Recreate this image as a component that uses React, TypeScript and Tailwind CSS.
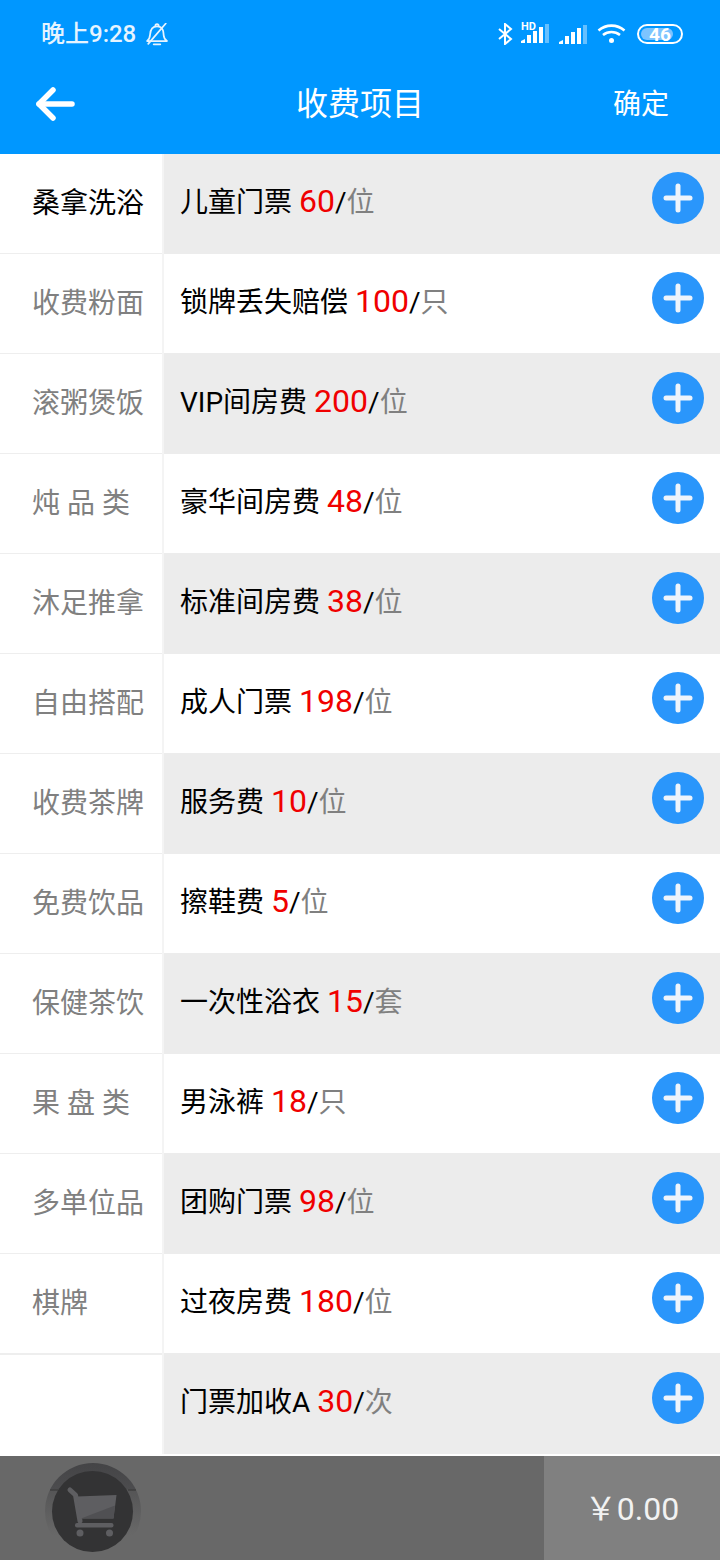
import React from "react";

const categories = [
    "桑拿洗浴",
    "收费粉面",
    "滚粥煲饭",
    "炖 品 类",
    "沐足推拿",
    "自由搭配",
    "收费茶牌",
    "免费饮品",
    "保健茶饮",
    "果 盘 类",
    "多单位品",
    "棋牌",
    "",
];

const items = [
    { name: "儿童门票", price: "60", unit: "位" },
    { name: "锁牌丢失赔偿", price: "100", unit: "只" },
    { name: "VIP间房费", price: "200", unit: "位" },
    { name: "豪华间房费", price: "48", unit: "位" },
    { name: "标准间房费", price: "38", unit: "位" },
    { name: "成人门票", price: "198", unit: "位" },
    { name: "服务费", price: "10", unit: "位" },
    { name: "擦鞋费", price: "5", unit: "位" },
    { name: "一次性浴衣", price: "15", unit: "套" },
    { name: "男泳裤", price: "18", unit: "只" },
    { name: "团购门票", price: "98", unit: "位" },
    { name: "过夜房费", price: "180", unit: "位" },
    { name: "门票加收A", price: "30", unit: "次" },
];

const SignalBars = () => (
    <svg width="28" height="19" viewBox="0 0 28 19" fill="white">
        <path d="M0 19v-2l4-2v4z" />
        <rect x="6" y="11" width="4" height="8" />
        <rect x="12" y="7" width="4" height="12" />
        <rect x="18" y="3" width="4" height="16" />
        <rect x="24" y="0" width="4" height="19" opacity="0.4" />
    </svg>
);

const StatusBar = () => (
    <div className="flex h-[68px] items-center justify-between pl-[41px] pr-[37px]">
        <div className="flex items-center gap-[10px]">
            <span className="text-[24px] font-medium leading-none text-[#e6f4ff]">晚上9:28</span>
            <svg width="22" height="23" viewBox="1 1 20 21" fill="none" stroke="#e6f4ff" strokeWidth="1.6" strokeLinejoin="round">
                <path d="M2 17.5c2.2-1.6 2.5-3.2 2.7-6C5 6.8 7.300 4 11 4c2.600 0 4.500 1.400 5.400 3.600.5 1.300.5 3 .7 4.600.2 2.300.9 3.900 3 5.300z" />
                <path d="M9.500 3.800c0-1 .7-1.800 1.500-1.800s1.500.8 1.500 1.800" />
                <path d="M8 20.500h6" strokeLinecap="round" />
                <path d="M3 20 19 1.500" strokeLinecap="round" />
            </svg>
        </div>
        <div className="flex items-center">
            <svg width="15" height="22" viewBox="0 0 15 22" fill="none" stroke="white" strokeWidth="2">
                <path d="M1 6l12 10-6 5V1l6 5L1 16" />
            </svg>
            <div className="relative ml-[8px] h-[20px] w-[28px]">
                <SignalBars />
                <span className="absolute left-0 top-[-2px] text-[11px] font-bold leading-[10px] text-white">HD</span>
            </div>
            <div className="ml-[10px]">
                <SignalBars />
            </div>
            <svg className="ml-[10px]" width="29" height="20" viewBox="0 0 29 20" fill="none" stroke="white" strokeWidth="2.600">
                <path d="M1.500 6.500c7.500-6.500 18.500-6.500 26 0" />
                <path d="M6 11c5-4 12-4 17 0" />
                <circle cx="14.500" cy="16.500" r="2.500" fill="white" stroke="none" />
            </svg>
            <div className="relative ml-[11px] flex h-[20px] w-[46px] items-center justify-center overflow-hidden rounded-full border-2 border-white">
                <div className="absolute inset-y-[2px] left-[2px] right-[8px] rounded-full bg-[#7cc4ff]" />
                <span className="relative text-[19px] font-bold leading-none text-white">46</span>
            </div>
        </div>
    </div>
);

const NavBar = () => (
    <div className="relative flex h-[86px] items-start justify-between pl-[36px] pr-[51px] pt-[19px]">
        <svg width="40" height="34" viewBox="0 0 40 34" fill="none" stroke="white" strokeWidth="5.500" strokeLinecap="round" strokeLinejoin="round">
            <path d="M36 17H3" />
            <path d="M17 3 3 17l14 14" />
        </svg>
        <h1 className="absolute inset-x-0 top-[14px] text-center text-[32px] font-normal leading-[44px] text-white">收费项目</h1>
        <span className="text-[28px] leading-[36px] text-white">确定</span>
    </div>
);

const AddButton = () => (
    <button className="mt-[18px] flex h-[52px] w-[52px] items-center justify-center self-start rounded-full bg-[#2a96fb]">
        <svg width="30" height="30" viewBox="0 0 30 30" stroke="#eef4fb" strokeWidth="5" strokeLinecap="round">
            <path d="M3 15h24" />
            <path d="M15 3v24" />
        </svg>
    </button>
);

const CartLogo = () => (
    <svg className="mb-[-4px] ml-[45px] mt-[7px] shrink-0" width="96" height="97" viewBox="0 0 96 97">
        <defs>
            <linearGradient id="ring" x1="0" y1="0" x2="0" y2="1">
                <stop offset="0" stopColor="#444446" />
                <stop offset="0.27" stopColor="#4c4c4e" />
                <stop offset="0.28" stopColor="#555556" />
                <stop offset="0.75" stopColor="#686868" />
                <stop offset="1" stopColor="#686868" />
            </linearGradient>
        </defs>
        <circle cx="48" cy="48" r="48" fill="url(#ring)" />
        <path d="M5 27h8M83 27h8" stroke="#333" strokeWidth="1" />
        <circle cx="47.500" cy="48.500" r="40.500" fill="#333334" />
        <path d="M25 27 30.500 32 35 58" fill="none" stroke="#5e5e61" strokeWidth="5" strokeLinecap="round" strokeLinejoin="round" />
        <path d="M32 33.500 71.500 32 68.500 55.500H35.500z" fill="#5e5e61" />
        <path d="M36 55.500 70 42.500 68.500 55.500z" fill="#505053" />
        <rect x="30" y="60" width="38.500" height="4.500" rx="2" fill="#5e5e61" />
        <circle cx="35" cy="70" r="3.500" fill="#5e5e61" />
        <circle cx="64.500" cy="70" r="3.500" fill="#5e5e61" />
    </svg>
);

export default function App() {
    return (
        <div className="flex h-[1560px] w-[720px] flex-col overflow-hidden bg-white font-['Roboto','Noto_Sans_CJK_SC',sans-serif]">
            <header className="relative z-10 bg-[#0097ff]">
                <StatusBar />
                <NavBar />
            </header>

            <main className="flex">
                <nav className="w-[162px] shrink-0">
                    {categories.map((label, index) => (
                        <div
                            key={index}
                            className={`flex items-center pl-[32px] text-[28px] leading-none whitespace-pre ${
                                index === 11
                                    ? "h-[101px] border-b-2 border-[#eeeeee]"
                                    : index === 12
                                      ? "h-[99px]"
                                      : "h-[100px] border-b border-[#eeeeee]"
                            } ${index === 0 ? "text-black" : "text-[#808080]"}`}
                        >
                            {label}
                        </div>
                    ))}
                </nav>
                <div className="w-[2px] shrink-0 bg-[#f4f4f4]" />
                <ul className="flex-1">
                    {items.map((item, index) => (
                        <li
                            key={item.name}
                            className={`flex items-center justify-between px-[16px] ${
                                index % 2 === 0 ? "-mt-px h-[101px] bg-[#ececec] pt-px" : "h-[100px] bg-white"
                            }`}
                        >
                            <p className="flex items-baseline pb-[6px] text-[28px] leading-none text-black">
                                <span>{item.name}</span>
                                <span className="ml-[7px] text-[32px] text-[#f00000]">{item.price}</span>
                                <span className="text-black">/</span>
                                <span className="text-[#808080]">{item.unit}</span>
                            </p>
                            <AddButton />
                        </li>
                    ))}
                </ul>
            </main>

            <footer className="mt-[2px] flex h-[104px] bg-[#686868]">
                <div className="flex-1">
                    <CartLogo />
                </div>
                <div className="flex w-[176px] items-center justify-center bg-[#808080] pt-[1px] text-[32px] leading-none text-[#f2f2f2]">
                    {"\uFFE50.00"}
                </div>
            </footer>
        </div>
    );
}
